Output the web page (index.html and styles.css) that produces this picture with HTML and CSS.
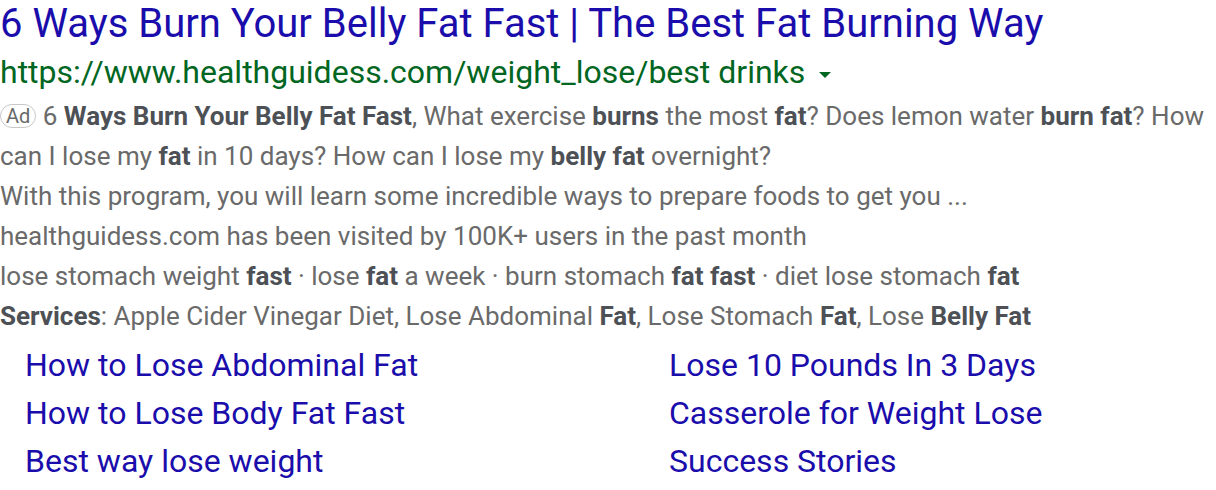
FILE: index.html
```html
<!DOCTYPE html>
<html>
<head>
<meta charset="utf-8">
<link rel="stylesheet" href="styles.css">
</head>
<body>
<div class="result">
  <a class="title">6 Ways Burn Your Belly Fat Fast | The Best Fat Burning Way</a>
  <div class="url">https://www.healthguidess.com/weight_lose/best drinks <span class="caret"></span></div>
  <div class="snippet">
    <p><span class="ad">Ad</span> 6 <b>Ways Burn Your Belly Fat Fast</b>, What exercise <b>burns</b> the most <b>fat</b>? Does lemon water <b>burn fat</b>? How can I lose my <b>fat</b> in 10 days? How can I lose my <b>belly fat</b> overnight?</p>
    <p>With this program, you will learn some incredible ways to prepare foods to get you ...</p>
    <p>healthguidess.com has been visited by 100K+ users in the past month</p>
    <p>lose stomach weight <b>fast</b> · lose <b>fat</b> a week · burn stomach <b>fat fast</b> · diet lose stomach <b>fat</b></p>
    <p><b>Services</b>: Apple Cider Vinegar Diet, Lose Abdominal <b>Fat</b>, Lose Stomach <b>Fat</b>, Lose <b>Belly Fat</b></p>
  </div>
  <div class="sitelinks">
    <a>How to Lose Abdominal Fat</a>
    <a>Lose 10 Pounds In 3 Days</a>
    <a>How to Lose Body Fat Fast</a>
    <a>Casserole for Weight Lose</a>
    <a>Best way lose weight</a>
    <a>Success Stories</a>
  </div>
</div>
</body>
</html>
```
FILE: styles.css
```css
html, body {
  margin: 0;
  padding: 0;
  background: #fff;
}
body {
  font-family: Roboto, "Liberation Sans", Arial, sans-serif;
}
.result {
  width: 1216px;
}
.title {
  display: block;
  font-size: 40px;
  line-height: 48px;
  color: #1a0dab;
}
.url {
  font-size: 32px;
  line-height: 48px;
  color: #006621;
}
.caret {
  display: inline-block;
  width: 0;
  height: 0;
  border-left: 6px solid transparent;
  border-right: 6px solid transparent;
  border-top: 6px solid #006621;
  vertical-align: middle;
  margin-left: 6px;
}
.snippet {
  font-size: 26px;
  line-height: 40px;
  color: #6a6a6a;
}
.snippet p {
  margin: 0;
}
.snippet b {
  color: #4d5156;
  font-weight: 700;
}
.ad {
  display: inline-block;
  font-size: 20px;
  line-height: 22px;
  padding: 0 5px;
  border: 1px solid #c8c8c8;
  border-radius: 12px;
  color: #6a6a6a;
  vertical-align: 2px;
}
.sitelinks {
  display: grid;
  grid-template-columns: 644px 1fr;
  padding-left: 25px;
  margin-top: 5px;
}
.sitelinks a {
  font-size: 32px;
  line-height: 48px;
  color: #1a0dab;
}
```
